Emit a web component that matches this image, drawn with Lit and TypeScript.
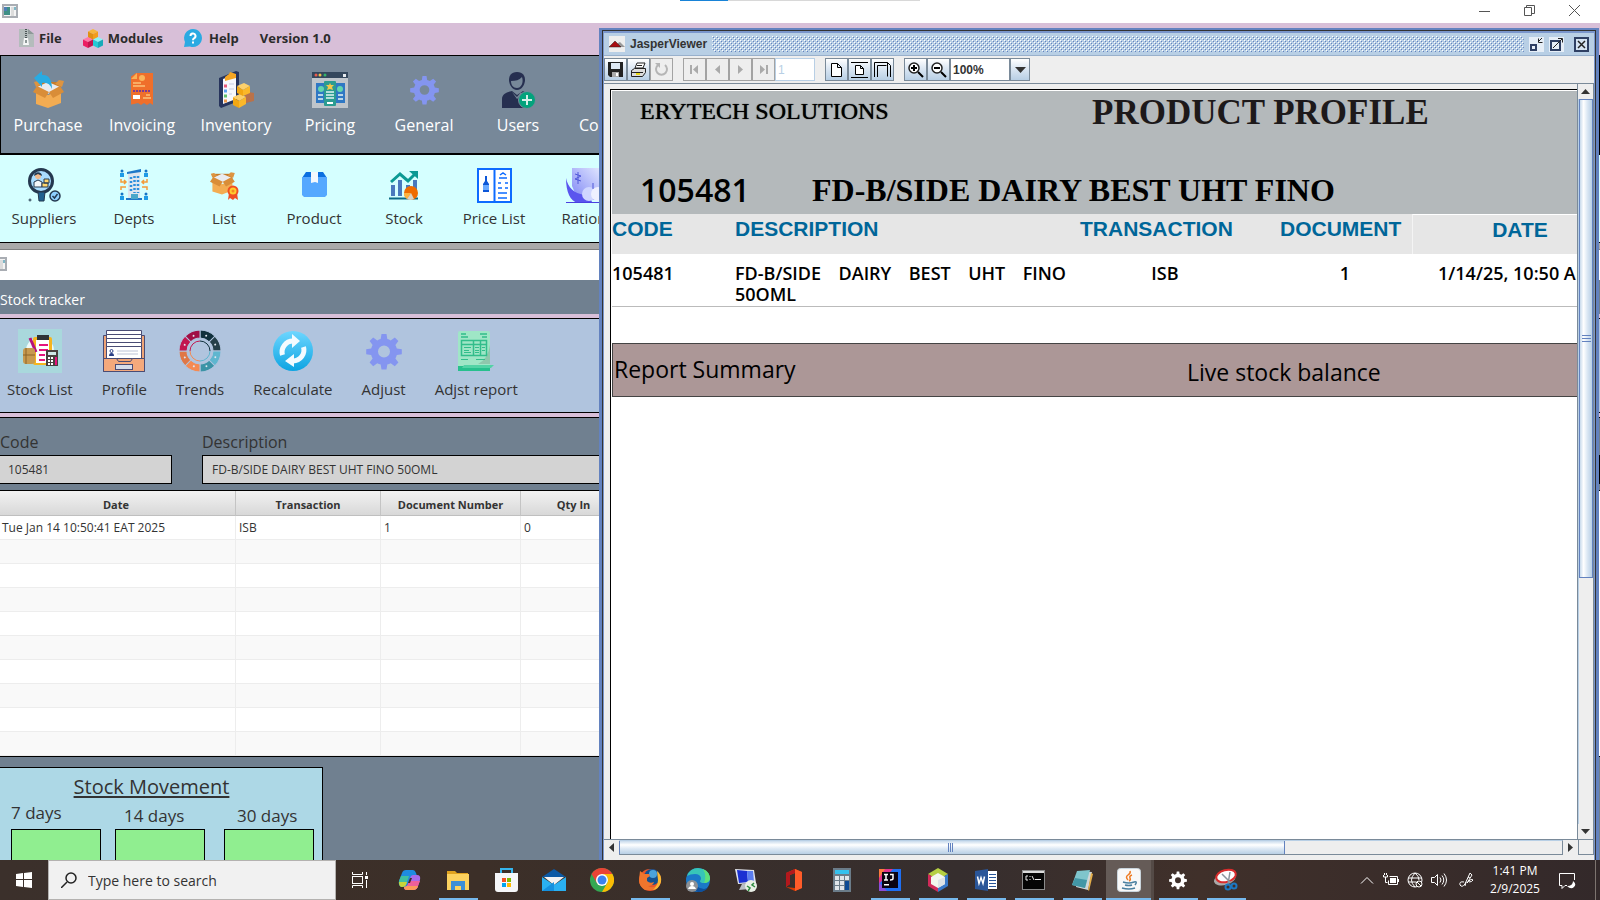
import { LitElement, html, svg, css, nothing, type TemplateResult, type SVGTemplateResult } from "lit";
import { customElement } from "lit/decorators.js";
import { classMap } from "lit/directives/class-map.js";

type Art = SVGTemplateResult;

const draw = (w: number, h: number, art: Art, box = `0 0 ${w} ${h}`) =>
  html`<svg width=${w} height=${h} viewBox=${box} aria-hidden="true">${art}</svg>`;

const gearPath =
  "M15.500 1h5l.8 5a12.500 12.500 0 0 1 3.400 1.400l4.100-3 3.600 3.600-3 4.100a12.500 12.500 0 0 1 1.400 3.400l5 .8v5l-5 .8a12.500 12.500 0 0 1-1.400 3.400l3 4.100-3.600 3.600-4.100-3a12.500 12.500 0 0 1-3.400 1.400l-.8 5h-5l-.8-5a12.500 12.500 0 0 1-3.400-1.400l-4.100 3-3.600-3.600 3-4.100a12.500 12.500 0 0 1-1.400-3.400l-5-.8v-5l5-.8a12.500 12.500 0 0 1 1.400-3.400l-3-4.100 3.600-3.600 4.100 3a12.500 12.500 0 0 1 3.400-1.400z M18 12.500a6 6 0 1 0 0 12 6 6 0 0 0 0-12z";

const gear = svg`<path fill="#8495f0" fill-rule="evenodd" d=${gearPath} />`;

const cube = (x: number, y: number, a: string, b: string, c: string) => svg`
  <g transform="translate(${x} ${y})">
    <path fill=${a} d="M0 2.500 5 0l5 2.500-5 2.500z" /><path fill=${b} d="M0 2.500 5 5v6L0 8.500z" /><path fill=${c} d="M10 2.500 5 5v6l5-2.500z" />
  </g>`;

const appGlyph = svg`
  <rect x="1" y="1" width="14" height="12" fill="#f4f4f4" stroke="#a9adb3" stroke-width="2" />
  <rect x="2" y="3" width="6" height="8" fill="#3f8f86" /><rect x="2" y="3" width="3" height="4" fill="#4f7fb8" />
  <rect x="9" y="3" width="3" height="9" fill="#dcdcdc" /><rect x="12" y="3" width="2" height="3" fill="#7fb7c6" />`;

const zip = svg`
  <path fill="#b4bcbc" d="M1 0h9l6 5v13H1z" /><path fill="#8e9898" d="M10 0v5h6z" />
  <path stroke="#4b5556" stroke-width="2" stroke-dasharray="1 1" d="M8 0v9" /><path fill="#f5f7f7" d="M6 9h4l1 7H5z" /><rect x="7" y="11" width="2" height="3" fill="#8e9898" />`;

const modules = svg`
  ${cube(5, 0, "#f6b73c", "#e09012", "#f29d1c")}${cube(0, 8, "#ff7aa5", "#ec1f63", "#c2164f")}${cube(10, 8, "#8df5f5", "#23cbd4", "#17aab8")}`;

const help = svg`
  <path fill="#2aaae2" d="M9 0a9 9 0 1 1-3 17.500L0 18l1-5A9 9 0 0 1 9 0z" />
  <path fill="none" stroke="#fff" stroke-width="2" d="M6.500 7a2.500 2.500 0 1 1 3.500 2.300c-1 .5-1 1-1 2" /><rect x="8" y="12.500" width="2" height="2" fill="#fff" />`;

const openBox = svg`
  <path fill="#c57c2b" d="M4 6h24v10H4z" /><path fill="#e9ebf0" d="M4 11l11-5 12 5-12 7z" />
  <path fill="#f3ac52" d="M3 14l12 5 13-5v13l-13 5-12-4z" /><path fill="#d98d38" d="M0 16l4-6 12 6-4 6z M31 16l-4-6-11 6 4 6z" />
  <path fill="#dd9440" d="M1 6l4-1 4 3-6 3z M31 5l-5-1-4 4 7 3z" />`;

const purchase = svg`<g transform="translate(0 5)">${openBox}</g><path fill="#29abe2" d="M1 7 9 0v4c7-1 10 5 10 14-2-5-5-7-10-6v4z" />`;

const invoicing = svg`
  <path fill="#ef6f2b" d="M5 0h17v32l-3-2-3 2-3-2-3 2-3-2-4 1-5 1V5z" /><path fill="#f9b157" d="M0 6 6 0v6z" />
  <circle cx="11" cy="5" r="3" fill="#fbb55b" /><path stroke="#fbc27a" stroke-width="1.500" d="M2 10h8M2 13h12" />
  <path stroke="#7a3b95" stroke-width="2" stroke-dasharray="2 1" d="M2 18h18" /><rect x="2" y="22" width="7" height="4" fill="#fff" /><path stroke="#fbc27a" stroke-width="1.500" d="M15 22h4M12 25h8" />`;

const inventory = svg`
  <path fill="#27345c" d="M1 7 18 0l3 1v29L3 37l-2-2z" /><path fill="#f7f8fc" d="M5 8 18 3v25L5 33z" />
  <path fill="#f6a623" d="M7 6l4-3 1-2 3 1 3 1v4L7 10z" />
  <path stroke="#e65c7b" stroke-width="3" d="M6 15h3" /><path stroke="#5aa2f0" stroke-width="3" d="M6 20h3" /><path stroke="#62c36b" stroke-width="3" d="M6 25h3" /><path stroke="#f39c4c" stroke-width="3" d="M6 30h3" />
  <path stroke="#c6cbe0" d="M11 13h5M11 18h5M11 23h3" />
  <path fill="#b9724a" d="M26 20l10 2v8l-8 2z" /><path fill="#fcd06b" d="M19 15l7-3 6 3-7 4z M15 26l7-3 6 3-7 4z" /><path fill="#f3a712" d="M19 15l6 4v6l-6-3z M15 26l6 4v7l-6-3z" /><path fill="#fbb829" d="M32 15l-7 4v6l7-3z M28 26l-7 4v7l7-4z" />`;

const pricing = svg`
  <rect width="36" height="36" fill="#bfc5cb" /><rect width="36" height="6" fill="#34475c" />
  <circle cx="4" cy="3" r="1.500" fill="#e95a4c" /><circle cx="8" cy="3" r="1.500" fill="#f2c14b" /><circle cx="13" cy="3" r="1.500" fill="#34b36b" /><rect x="31" y="2" width="3" height="3" fill="#e6eaee" />
  <rect x="4" y="11" width="29" height="20" fill="#2f78c4" /><rect x="12" y="9" width="12" height="25" rx="1" fill="#2c9c91" />
  <circle cx="9" cy="17" r="3" fill="#63d6ae" /><circle cx="28" cy="17" r="3" fill="#63d6ae" />
  <path fill="#f5c84b" d="M18 11l1 2h3l-2 2 1 3-3-1-3 1 1-3-2-2h3z" /><path stroke="#e5f5f2" stroke-width="1.500" d="M14 20h8M14 23h8M14 26h8M6 23h5M6 27h5M26 23h5M26 27h5" /><rect x="15" y="30" width="6" height="2" fill="#fff" />`;

const users = svg`
  <path fill="#262f50" d="M16 0c6 0 8 4 8 8s-3 10-8 10-8-6-8-10 2-8 8-8z" /><path fill="#778899" d="M10 9c5 0 8-1 11-4 2 6-1 11-5 11s-6-3-6-7z" />
  <path fill="#262f50" d="M1 36V27c0-5 5-7 10-8l5 4 6-4 7 4v13z" /><path fill="#778899" d="M11 20l5 5 4-5 1 2-5 5z" />
  <circle cx="26" cy="28" r="8.500" fill="#03a27c" stroke="#778899" /><path stroke="#d6efe9" stroke-width="2" d="M26 23v10M21 28h10" />`;

const suppliers = svg`
  <circle cx="13" cy="13" r="11.500" fill="#a9dcff" stroke="#24384f" stroke-width="3" /><circle cx="10" cy="8" r="3" fill="#f1b98c" /><path fill="#24384f" d="M6 8c0-5 8-5 8 0l-4-2z" />
  <path fill="#f5f7fa" stroke="#24384f" d="M6 19v-5l4-2 4 2v5z" /><path fill="#ffd66e" stroke="#24384f" d="M14 15h6v4h-6z M16 11h5v4h-5z" />
  <path fill="#20608f" stroke="#24384f" d="M10 24h7l-1 9h-5z" /><circle cx="27" cy="28" r="5" fill="#8fd0ff" stroke="#24384f" stroke-width="1.500" /><path fill="none" stroke="#24384f" stroke-width="1.500" d="M24.500 28l2 2 3-4" /><circle cx="2" cy="32" r="1" fill="none" stroke="#24384f" />`;

const depts = svg`
  <path fill="#dfe6ee" d="M8 3l12-2v29H8z" /><path fill="#1f78c8" d="M7 3l14-3v3L7 5z M6 29h16v2H6z" />
  <path stroke="#2d8fdd" stroke-width="2.500" stroke-dasharray="2 2" d="M11 8v16M14.500 7v17M18 7v17" /><rect x="11" y="25" width="7" height="5" fill="#4aa7c9" />
  ${[[2, 2], [26, 2], [2, 25], [26, 25]].map(([x, y]) => svg`<circle cx=${x} cy=${y} r="1.500" fill="#1374c5" /><rect x=${x - 2} y=${y + 2} width="4" height="4" fill="#1e9be6" />`)}
  <path fill="none" stroke="#f39b3a" stroke-width="1.500" d="M1 10v3h4M27 10v3h-4M1 21v-3h5M27 21v-3h-5M4 11l2 2-2 2M24 11l-2 2 2 2" />`;

const listBox = svg`<g transform="scale(.8)">${openBox}</g>
  <path fill="#f04e23" d="M19 24h4v7l-3-2-2 2z M23 24h4l1 7-3-2-2 2z" /><circle cx="23" cy="22" r="5.500" fill="#f04e23" /><circle cx="23" cy="22" r="3.500" fill="#ffcb2e" /><circle cx="23" cy="22" r="1.500" fill="#f58a1f" />`;

const product = svg`<path fill="#0b6fe0" d="M4 0h17l4 6H0z" /><path fill="#55a8ff" d="M0 5h25v18l-2 2H2l-2-2z" /><path fill="#f4f8fc" d="M9 0h7v11l-3-1-4 1z" />`;

const stock = svg`
  <path stroke="#4979bd" stroke-width="4" d="M4 15v11M11 10v16M19 15v11M26 10v16" /><path fill="none" stroke="#0b9a94" stroke-width="3" d="M2 12l9-8 8 7 7-7" /><path fill="#0b9a94" d="M20 1h9v8z" />
  <path stroke="#0c6a86" stroke-width="2" d="M0 28.500h29" /><circle cx="22" cy="23" r="7" fill="#ef6c00" /><path fill="#ffb33f" d="M22 23h-7a7 7 0 0 0 3 6z" /><path fill="#d9d3c5" d="M22 23l-4 6a7 7 0 0 0 7 0z" />`;

const priceList = svg`
  <rect x="1" y="1" width="33" height="33" fill="#fff" stroke="#0d6bff" stroke-width="2" /><path stroke="#0d6bff" stroke-width="2" d="M17.500 1v33" />
  <path fill="#0d57d8" d="M8 8h2v5l2 3v8H6v-8l2-3z" /><rect x="6" y="17" width="6" height="5" fill="#69a9ff" /><path stroke="#0d6bff" stroke-width="1.500" d="M22 10h8M21 15h3M21 20h4M21 25h9M21 30h9M28 15h3M28 20h3" /><path fill="none" stroke="#0d6bff" stroke-width="1.500" d="M23 7l3-2 3 2" />`;

const ration = svg`
  <defs><linearGradient id="rg" x1="0" y1="1" x2="1" y2="0"><stop offset="0" stop-color="#7f86f5" /><stop offset="1" stop-color="#e3e9ff" /></linearGradient></defs>
  <path fill="url(#rg)" d="M6 0h30v32H12L6 18z" /><path fill="#5a55ee" d="M0 10c2 10 8 15 18 17 5 1 8 4 8 8H12C4 33 0 24 0 10z" /><circle cx="23" cy="26" r="7" fill="#cfd6ff" /><circle cx="32" cy="26" r="7" fill="#eef0ff" /><path fill="none" stroke="#4f58d8" d="M12 4v12M9 6l6 2-6 3 6 2M27 15v6" /><path stroke="#4a3fe0" d="M0 34.500h36" />`;

const stockList = svg`
  <rect width="44" height="44" fill="#a9d8dc" /><circle cx="22" cy="22" r="14" fill="#eef9f9" /><rect x="15" y="8" width="19" height="28" rx="2" fill="#f6b51e" /><rect x="18" y="11" width="13" height="23" fill="#fff" /><rect x="19" y="6" width="12" height="5" fill="#303438" />
  <path stroke="#e5137d" stroke-width="2" d="M21 16h9M21 21h9M21 26h6M21 31h6" /><path stroke="#b5127b" stroke-width="3" d="M12 9l6 14" /><rect x="5" y="19" width="12" height="16" rx="3" fill="#c79a4f" /><path stroke="#8d6429" d="M8 19v16M5 26h12" />
  <rect x="28" y="21" width="12" height="16" fill="#47403f" /><rect x="30" y="23" width="8" height="3" fill="#cfe8e8" /><path stroke="#fff" stroke-width="2" stroke-dasharray="2 1" d="M30 29h6M30 32h6M30 35h6" /><rect x="37" y="28" width="2" height="8" fill="#e5137d" />`;

const profile = svg`
  <path fill="#efa476" stroke="#4a4c74" d="M.5 5.500h5V20h31V5.500h5V42H.5z" /><path fill="#fff" stroke="#4a4c74" d="M3.500.500h35v4h-35z M3.500 4.500h35v4h-35z M3.500 8.500h35v4h-35z M3.500 12.500h35v4h-35z M3.500 16.500h35v12h-35z" />
  <circle cx="8.500" cy="21" r="1.500" fill="#fff" stroke="#2b3f86" /><path fill="#2b3f86" d="M6 26q0-3 2.500-3t2.500 3z" /><path stroke="#bcc3d6" d="M14 21h21M14 24h21" /><path fill="#f4a97c" stroke="#4a4c74" d="M.500 28.500h13l2 3h12l2-3h12v13H.500z" /><rect x="12.500" y="34.500" width="17" height="5" fill="#d5dcea" stroke="#4a4c74" />`;

const ringColors = ["#10303c", "#25404a", "#5fb6cf", "#3b93a6", "#f58a52", "#e07746", "#c21750", "#a00f45"];
const trends = svg`
  ${ringColors.map((c, i) => svg`<path fill=${c} stroke="#b0c4de" transform="rotate(${i * 45} 21 21)" d="M21 0a21 21 0 0 1 14.850 6.150l-5.660 5.660A13 13 0 0 0 21 8z" /><circle cx="21" cy="4.500" r="1" fill="#dfe6ee" transform="rotate(${i * 45 + 22} 21 21)" />`)}
  <path fill="none" stroke="#c21750" d="M11 21a10 10 0 0 1 10-10" /><path fill="none" stroke="#10303c" d="M21 11a10 10 0 0 1 10 10" /><path fill="none" stroke="#5fb6cf" d="M31 21a10 10 0 0 1-10 10" /><path fill="none" stroke="#f58a52" d="M21 31a10 10 0 0 1-10-10" />`;

const recalc = svg`
  <defs><linearGradient id="rc" x1="0" y1="0" x2="0" y2="1"><stop offset="0" stop-color="#6ed6ff" /><stop offset="1" stop-color="#0ca4e2" /></linearGradient></defs>
  <circle cx="20" cy="20" r="20" fill="url(#rc)" /><path fill="none" stroke="#f4fbff" stroke-width="5" d="M9.500 24a11 11 0 0 1 10.500-14M30.500 16a11 11 0 0 1-10.500 14" /><path fill="#f4fbff" d="M19 3l8 7-8 7z M21 23l-9 7 9 6z" />`;

const adjReport = svg`
  <path fill="#9fe6c6" d="M0 2q0-2 2-2h28q2 0 2 2v34H0z" /><path fill="#27c08d" d="M0 35h32v5H0z" /><path fill="#52d3a5" d="M6 34h30l-3 3H4z" /><path fill="#8fc7ac" d="M32 14v19H20q10-5 12-19z" />
  <path stroke="#32bd8b" stroke-width="1.500" d="M3 3h5M3 6h7M22 3h7M24 6h5" /><path fill="none" stroke="#32bd8b" stroke-width="1.500" d="M3.500 9.500h25v15h-25z M3.500 13.500h25 M15.500 9.500v15 M22.500 9.500v15" /><path stroke="#32bd8b" d="M6 16.500h7M6 19.500h5M6 21.500h7M17 16.500h4M17 19.500h4M17 21.500h4M24 16.500h3M24 19.500h3M3 28.500h7M18 28.500h9" />`;

interface Tool { label: string; w: number; h: number; art?: Art; box?: string; cut?: boolean; }

const mainTools: Tool[] = [
  { label: "Purchase", w: 31, h: 38, art: purchase },
  { label: "Invoicing", w: 22, h: 34, art: invoicing },
  { label: "Inventory", w: 37, h: 38, art: inventory },
  { label: "Pricing", w: 36, h: 36, art: pricing },
  { label: "General", w: 29, h: 30, art: gear, box: "0 0 36 37" },
  { label: "Users", w: 35, h: 37, art: users },
  { label: "Co", w: 30, h: 36, cut: true },
];

const subTools: Tool[] = [
  { label: "Suppliers", w: 33, h: 34, art: suppliers },
  { label: "Depts", w: 28, h: 32, art: depts },
  { label: "List", w: 29, h: 32, art: listBox },
  { label: "Product", w: 25, h: 26, art: product },
  { label: "Stock", w: 30, h: 30, art: stock },
  { label: "Price List", w: 35, h: 35, art: priceList },
  { label: "Ration", w: 36, h: 35, art: ration },
];

const trackerTools: Tool[] = [
  { label: "Stock List", w: 44, h: 44, art: stockList },
  { label: "Profile", w: 42, h: 42, art: profile },
  { label: "Trends", w: 42, h: 42, art: trends },
  { label: "Recalculate", w: 40, h: 40, art: recalc },
  { label: "Adjust", w: 36, h: 37, art: gear },
  { label: "Adjst report", w: 36, h: 40, art: adjReport },
];

const flag = (x: number, y: number, s: number) => svg`
  <rect x=${x} y=${y} width=${s} height=${s} fill="#f25022" /><rect x=${x + s + 1} y=${y} width=${s} height=${s} fill="#7fba00" />
  <rect x=${x} y=${y + s + 1} width=${s} height=${s} fill="#00a4ef" /><rect x=${x + s + 1} y=${y + s + 1} width=${s} height=${s} fill="#ffb900" />`;

const taskArt: { name: string; art: Art; open?: boolean; active?: boolean }[] = [
  { name: "Task View", art: svg`<g fill="none" stroke="#fff" transform="translate(2 4)"><rect x=".5" y="4.500" width="10" height="7" /><path d="M.500 0v2.500h10V0M.500 16v-2.500h10V16M14.500 0v3M14.500 8v8" /><rect x="13.500" y="4.500" width="2" height="2" fill="#fff" /></g>` },
  { name: "Copilot", art: svg`<path fill="#1e8be0" d="M8 2h7q2 0 3 3l1 3h-4q-2 0-3 3l-2 5q-1 3-4 3H4q-4-1-3-6L4 5q1-3 4-3z" /><path fill="#3fc0a0" d="M3 8h8l-3 9q-1 2-4 2-4-1-3-6z" /><path fill="#c8d43a" d="M1 14h8l-1 3q-1 2-4 2-3 0-3-5z" /><path fill="#a66bea" d="M15 7h4q4 0 3 5l-2 6q-1 4-5 4H9q-3 0-3-3 3 0 4-3l2-6q1-3 3-3z" /><path fill="#ee5f9b" d="M11 13h11l-2 5q-1 4-5 4H9q-3 0-3-3 3 0 4-3z" /><path fill="#fb9a5b" d="M9 18h11q-1 4-5 4H9q-3 0-3-3z" /><path fill="#3a302a" d="M12 10h2l-2 5h-2z" />` },
  { name: "File Explorer", open: true, art: svg`<path fill="#e0a320" d="M1 3h8l2 2h11v4H1z" /><path fill="#fcd25f" d="M1 6h22v16H1z" /><path fill="#3c8fd6" d="M5 13h14v9h-4v-4H9v4H5z" />` },
  { name: "Store", art: svg`<path fill="none" stroke="#35b5ee" stroke-width="2" d="M7 6V1h11v5" /><path fill="#f5f6f8" d="M1 5h23v16q0 3-3 3H4q-3 0-3-3z" />${flag(8, 10, 4)}` },
  { name: "Mail", art: svg`<path fill="#0c59a4" d="M0 9 12 1l12 8z" /><path fill="#f2f2f2" d="M2 9h20l-10 8z" /><path fill="#2ab0f1" d="M0 9l12 8 12-8v14H0z" /><path fill="#1490df" d="M0 23l12-9v9z" />` },
  { name: "Chrome", art: svg`<circle cx="12" cy="12" r="12" fill="#34a853" /><path fill="#ea4335" d="M1.600 6A12 12 0 0 1 22.400 6H12a6 6 0 0 0-5.200 3z" /><path fill="#ea4335" d="M1.600 6 6.800 15 12 6z" /><path fill="#fbbc05" d="M22.400 6A12 12 0 0 1 12 24l5.200-9a6 6 0 0 0 0-6L12 6z" /><circle cx="12" cy="12" r="6" fill="#fff" /><circle cx="12" cy="12" r="4.500" fill="#3b82f0" />` },
  { name: "Firefox", open: true, art: svg`<circle cx="12" cy="12" r="11" fill="#e8562a" /><circle cx="14" cy="9" r="8" fill="#14508f" /><circle cx="15" cy="6" r="4" fill="#4aa3dc" /><path fill="#f0752c" d="M2 3l4 3 5 0 1 2-3 2v3q3 3 7 1-1 4-6 4 5 3 9-1l-3 5H7Q1 18 1 12z" /><path fill="#fbb935" d="M19 3q5 4 4 11-2 7-8 8 5-5 5-10z" />` },
  { name: "Edge", art: svg`<circle cx="12" cy="12" r="12" fill="#1a78c8" /><path fill="#37c5b8" d="M1 8Q4 0 12 0q11 1 12 10 0 5-6 5-4 0-4-2 1-1 1-3-1-4-6-4-5 0-8 2z" /><path fill="#5fe07a" d="M17 1q7 3 7 10-1 4-6 4 3-7-1-14z" /><path fill="#0d4f9d" d="M9 12q-1 8 9 9 3 0 5-3-3 6-11 6-7-2-3-12z" /><circle cx="6" cy="18" r="6" fill="#8d9196" /><circle cx="6" cy="16" r="2" fill="#fff" /><path fill="#fff" d="M2 21q1-3 4-3t4 3z" />` },
  { name: "Remote Desktop", art: svg`<path fill="#e1e4ec" d="M1 1l19 1 2 13-18 1z" /><path fill="#1a30d2" d="M3 2l10 1 1 11-9 1z" /><path fill="#5a7df0" d="M13 3h6l1 11-6 0z" /><path fill="#b9bec5" d="M8 16l7-1 1 6-11 1z" /><circle cx="17" cy="18" r="6" fill="#e9efe6" /><path fill="none" stroke="#2c8b3f" stroke-width="1.500" d="M13 18l3 2-2 3M20 15l-2 2 3 2" />` },
  { name: "Office", art: svg`<path fill="#d83b01" d="M4 5l9-4 7 3v16l-7 3-9-4 9 1V5L8 7v9l-4 3z" /><path fill="#ff5c29" d="M13 1l7 3v16l-7 3z" /><path fill="#b3181d" d="M4 5l9-4v4L8 7v9l-4 3z" />` },
  { name: "Calculator", art: svg`<rect x="3" y="0" width="18" height="24" fill="#6b7c89" /><rect x="5" y="2" width="14" height="4" fill="#34c1ee" /><g fill="#dfe5ea"><rect x="5" y="8" width="4" height="4" /><rect x="10" y="8" width="4" height="4" /><rect x="15" y="8" width="4" height="4" /><rect x="5" y="13" width="4" height="4" /><rect x="10" y="13" width="4" height="4" /><rect x="5" y="18" width="4" height="4" /><rect x="10" y="18" width="4" height="4" /></g><rect x="15" y="13" width="4" height="9" fill="#0c4a94" />` },
  { name: "IntelliJ IDEA", open: true, art: svg`<rect x="1" y="1" width="22" height="22" fill="#1f6ff2" /><path fill="#e4318a" d="M1 1h14L1 16z" /><path fill="#fc7a3c" d="M1 1h6L1 10z" /><path fill="#8a4fd8" d="M1 14l8 9H1z" /><rect x="4" y="4" width="16" height="16" fill="#0b0310" /><path stroke="#fff" stroke-width="1.500" fill="none" d="M6 6.500h4M8 6.500v5M6 12h4M12 6.500h3v4q0 1.500-3 1.500" /><rect x="6" y="16" width="5" height="1.500" fill="#fff" />` },
  { name: "NetBeans", open: true, art: svg`<path fill="#b5cf42" d="M12 0l10 6-10 6L2 6z" /><path fill="#d02a59" d="M2 6l10 6v12L2 18z" /><path fill="#3a79c9" d="M22 6l-10 6v12l10-6z" /><path fill="#f3f6ee" d="M12 5l7 4v7l-7 4-7-4V9z" /><path fill="#dfe3e6" d="M12 12l7-3v7l-7 4z" />` },
  { name: "Word", open: true, art: svg`<rect x="12" y="3" width="11" height="18" fill="#fff" /><path stroke="#2a5699" d="M15 6.500h7M15 9.500h7M15 12.500h7M15 15.500h7M15 18.500h7" /><path fill="#2a5699" d="M1 3l13-2v22L1 21z" /><path fill="none" stroke="#fff" stroke-width="1.500" d="M3.500 8.500l1.500 7 2-6 2 6 1.500-7" />` },
  { name: "Command Prompt", open: true, art: svg`<rect x=".5" y="2.500" width="22" height="19" fill="#050505" stroke="#8b8b8b" /><rect x="1" y="3" width="21" height="2" fill="#dcdcdc" /><path fill="none" stroke="#ededed" d="M6 8H4v4h2M8 8v1M8 11v1M10 8l2 4M13 11.500h6" />` },
  { name: "Notepad", open: true, art: svg`<path fill="#cfd6d8" d="M8 3l14 1-4 18-12-3z" /><path fill="#7fc5cc" d="M7 3l13-1-5 18-13-3z" /><path fill="#4397a6" d="M5 10l12 2-2 8-13-3z" /><path fill="#e6b04a" d="M21 5l2 1-4 17-1-1z" />` },
  { name: "Java", open: true, active: true, art: svg`<rect x=".5" y=".5" width="23" height="23" rx="3" fill="#f8f8f8" stroke="#c9d4dc" /><path fill="none" stroke="#ee7b23" stroke-width="1.500" d="M13 3q1 2-2 4t0 5M15 7q-3 1-2 3t-1 3" /><path fill="none" stroke="#4a7f9f" stroke-width="1.500" d="M6 14q6 2 11 0M17 14q4-1 1 3M8 17q4 1 7 0M5 20q7 2 13 0" />` },
  { name: "Settings", open: true, art: svg`<g transform="translate(3 3) scale(.5)"><path fill="#fff" fill-rule="evenodd" d=${gearPath} /></g>` },
  { name: "Snipping Tool", open: true, art: svg`<ellipse cx="11" cy="11" rx="11" ry="6" fill="#a9a9a9" transform="rotate(-15 11 12)" /><ellipse cx="12" cy="8" rx="10" ry="6" fill="#fdfdfd" stroke="#da2c2c" stroke-width="2" transform="rotate(-15 12 8)" /><path stroke="#8b949c" stroke-width="1.500" d="M8 6l9 9M16 4l-2 12" /><circle cx="14" cy="19" r="2.500" fill="none" stroke="#1c78c2" stroke-width="2" /><circle cx="20" cy="18" r="2.500" fill="none" stroke="#1c78c2" stroke-width="2" />` },
];

const trayArt: { name: string; art: Art }[] = [
  { name: "Show hidden icons", art: svg`<path d="M2 11.500l6-6 6 6" />` },
  { name: "Battery", art: svg`<path d="M.500 3v2h4V3M1.500 1v2M3.500 1v2M2.500 5v5.500h2" /><path d="M6.500 4.500h8v8h-9v-4" /><path fill="#fff" stroke="none" d="M7 6h6v5H7z" /><path d="M15.500 7v3" />` },
  { name: "Network", art: svg`<circle cx="8" cy="8" r="7" /><path d="M1 6h14M1 10h8M8 1q-7 7 0 14M8 1q4 3 4 7" /><circle cx="12" cy="12" r="3" fill="#3a302a" /><path d="M10 10l4 4" />` },
  { name: "Volume", art: svg`<path d="M.500 5.500h3l3-3v11l-3-3h-3z" /><path d="M9 5.500q2 2.500 0 5M11 3.500q3.500 4.500 0 9M13 1.500q5 6.500 0 13" />` },
  { name: "Ink Workspace", art: svg`<path d="M5 10q-5-1-4 3 2 3 5-1l5-11 2 2-5 8q4-5 6-3-1 2-4 2M6 14l1-4M9 5l2 1" />` },
];

@customElement("desktop-taskbar")
class DesktopTaskbar extends LitElement {
  static styles = css`
    :host { display: flex; height: 40px; background: linear-gradient(90deg, #3b302b, #3c2f28 30%, #362e2e 60%, #40302a 75%, #33292a); font-family: "Open Sans", "Noto Sans", sans-serif; color: #fff; }
    button { border: 0; padding: 0; background: none; color: inherit; font: inherit; display: grid; place-items: center; }
    .start { width: 48px; }
    .search { display: flex; align-items: center; gap: 11px; width: 288px; box-sizing: border-box; padding: 0 12px; border: 1px solid #b4b2b0; background: #f1f1f1; color: #222; }
    .search input { flex: 1; min-width: 0; border: 0; padding: 0; background: none; outline: 0; font: 14px "Open Sans", sans-serif; color: #222; }
    .search input::placeholder { color: #333; opacity: 1; }
    .tasks { display: flex; flex: 1; min-width: 0; padding-left: 2px; }
    .task { width: 48px; height: 40px; flex: none; box-sizing: border-box; }
    .open { background: linear-gradient(#76b9ed, #76b9ed) center bottom / 39px 2px no-repeat; }
    .active { background: linear-gradient(#76b9ed, #76b9ed) center bottom / 48px 2px no-repeat, #655b57; border-right: 3px solid #544a46; }
    .tray { display: flex; align-items: center; padding-right: 8px; }
    .tray button { width: 24px; height: 40px; }
    .tray .ink { width: 32px; }
    .tray svg { fill: none; stroke: #fff; }
    .clock { width: 64px; text-align: center; font-size: 12px; line-height: 18px; }
    .tray .note { width: 40px; }
    .edge { width: 1px; background: #7d746f; margin-right: 4px; height: 40px; }
  `;

  render() {
    return html`
      <button class="start" aria-label="Start">${draw(16, 16, svg`<path fill="#fff" d="M0 2l7-1v6H0z M8 1l8-1v7H8z M0 8h7v7l-7-1z M8 8h8v8l-8-1z" />`)}</button>
      <label class="search">
        ${draw(16, 16, svg`<circle cx="10" cy="6" r="5" fill="none" stroke="#222" stroke-width="1.500" /><path stroke="#222" stroke-width="1.500" d="M6 10l-6 6" />`)}
        <input type="text" placeholder="Type here to search" aria-label="Type here to search" />
      </label>
      <nav class="tasks">
        ${taskArt.map((t) => html`<button class=${classMap({ task: true, open: !!t.open, active: !!t.active })} aria-label=${t.name}>${draw(24, 24, t.art)}</button>`)}
      </nav>
      <div class="tray">
        ${trayArt.map((t) => html`<button class=${t.name === "Ink Workspace" ? "ink" : nothing} aria-label=${t.name}>${draw(16, 16, t.art)}</button>`)}
        <div class="clock">1:41 PM<br />2/9/2025</div>
        <button class="note" aria-label="Notifications">${draw(17, 17, svg`<path d="M8 13.500H6l-3 3v-3H.500v-12h15V8" /><path fill="#fff" stroke="none" d="M14 9q0 5-6 5 4 4 7 1t-1-6z" />`)}</button>
      </div>
      <div class="edge"></div>`;
  }
}

@customElement("jasper-viewer")
class JasperViewer extends LitElement {
  static styles = css`
    :host { display: flex; flex-direction: column; box-sizing: border-box; background: #eee; border: solid #6382bf; border-width: 2px 3px 0; font-family: "Liberation Sans", Arial, sans-serif; }
    button { padding: 0; margin: 0; font: inherit; }
    svg { display: block; }
    .frame { display: flex; flex-direction: column; flex: 1; min-height: 0; border: solid #333; border-width: 1px 1px 0; }
    .inner { display: flex; flex-direction: column; flex: 1; min-height: 0; border: solid #7a96cc; border-width: 2px 1px 0; }
    .title { display: flex; align-items: center; gap: 5px; height: 23px; padding: 0 5px; box-sizing: border-box; background: #b8cfe5; border-bottom: 1px solid #98b0cc; color: #333; font-size: 12px; font-weight: bold; }
    .logo { background: #eee; }
    .bumps { flex: 1; height: 16px; min-width: 0; }
    .title button { border: 0; background: none; }
    .bar { display: flex; align-items: center; gap: 10px; height: 28px; box-sizing: border-box; border-bottom: 1px solid #7a8a99; }
    .group { display: flex; }
    .tool { box-sizing: border-box; width: 23px; height: 23px; border: 1px solid #7a8a99; background: linear-gradient(#fff, #dfe9f4 40%, #b8cfe5); display: grid; place-items: center; }
    .tool:disabled { background: #eee; border-color: #a3a3a3; }
    .tool.drop { width: 20px; }
    .page { box-sizing: border-box; width: 40px; height: 23px; border: 1px solid #b8cfe5; background: #fff; color: #b8cfe5; font: 12px "Liberation Sans", sans-serif; padding: 0 2px; }
    .zoom { appearance: none; box-sizing: border-box; width: 60px; height: 23px; border: 1px solid #7a8a99; border-radius: 0; background: #fff; color: #333; font: bold 12px "Liberation Sans", sans-serif; padding: 0 2px; }
    .pane { flex: 1; min-height: 0; display: grid; grid-template-columns: minmax(0, 1fr) 16px; grid-template-rows: minmax(0, 1fr) 16px; margin-bottom: 5px; }
    .view { overflow: hidden; padding: 5px 0 0 6px; border-right: 1px solid #7a8a99; }
    .sheet { height: 100%; border: solid #000; border-width: 1px 0 0 1px; background: #fff; padding: 1px 0 0 1px; color: #000; }
    .head { background: #b4b9bb; height: 123px; display: grid; grid-template-columns: 172px 280px 1fr; grid-template-rows: 56px 67px; padding-left: 28px; box-sizing: border-box; white-space: nowrap; }
    h1, h2, p { margin: 0; font-weight: normal; }
    .firm { grid-column: 1 / 3; font: 24px/41px "Liberation Serif", serif; text-shadow: 0 0 1px #000; }
    .kind { font: bold 35px/44px "Liberation Serif", serif; color: #1d191a; }
    .num { font: 600 32px/85px "Open Sans", sans-serif; }
    .item { grid-column: 2 / 4; font: bold 32px/86px "Liberation Serif", serif; }
    table { border-collapse: separate; border-spacing: 0; table-layout: fixed; width: 1015px; }
    th, td { box-sizing: border-box; padding: 0; vertical-align: top; }
    .c1 { width: 123px; } .c2 { width: 335px; } .c3 { width: 190px; } .c4 { width: 152px; } .c5 { width: 215px; }
    th { background: #e6e6e6; color: #069; height: 40px; text-align: left; font: bold 21px/30px "Liberation Sans", sans-serif; }
    td { height: 53px; padding-top: 9px; text-align: center; border-bottom: 1px solid #bbb; font: 600 18px/21px "Open Sans", sans-serif; }
    .l { text-align: left; }
    .j { text-align: justify; padding-right: 4px; }
    .pad { padding-left: 18px; }
    .when { text-align: left; padding-left: 26px; }
    th.c3 { padding-left: 10px; } th.c4 { padding-left: 20px; }
    th.c5 { text-align: center; border-top: 1px solid #fff; border-left: 1px solid #f4f4f4; }
    .sum { display: grid; grid-template-columns: 573px 1fr; margin-top: 36px; border: solid #444; border-width: 1px 0 1px 1px; background: #ac9797; height: 52px; padding-left: 1px; font: 23px/50px "Open Sans", sans-serif; }
    .sum p + p { padding-top: 3px; }
    .vs { display: flex; flex-direction: column; border-right: 1px solid #7a8a99; }
    .hs { display: flex; border: solid #7a8a99; border-width: 1px 0 1px; }
    .arrow { display: grid; place-items: center; width: 15px; height: 15px; border: 0; background: #eee; flex: none; }
    .vs .track { flex: 1; box-sizing: border-box; border-left: 1px solid #b8cfe5; display: flex; }
    .hs .track { flex: 1; display: flex; border-right: 1px solid #7a8a99; border-top: 1px solid #b8cfe5; box-sizing: border-box; }
    .vthumb { width: 15px; height: 66%; box-sizing: border-box; border: solid #6382bf; border-width: 1px; background: linear-gradient(90deg, #c8daec, #fff 30%, #dce8f4 60%, #b8cfe5); display: grid; place-items: center; }
    .hthumb { width: 70.600%; box-sizing: border-box; border: solid #6382bf; border-width: 0 1px; background: linear-gradient(#c8daec, #fff 30%, #dce8f4 60%, #b8cfe5); display: grid; place-items: center; }
    .corner { border: 1px solid #7a8a99; }
  `;

  private tool(name: string, art: Art, off = false): TemplateResult {
    return html`<button class="tool" aria-label=${name} ?disabled=${off}>${draw(17, 17, art)}</button>`;
  }

  render() {
    const arrow = (name: string, d: string) => html`<button class="arrow" aria-label=${name}>${draw(9, 9, svg`<path fill="#333" d=${d} />`)}</button>`;
    const sheetIcon = "M3.500 2.500h6l4 4v9h-10z M9.500 2.500v4h4";
    return html`
      <div class="frame"><div class="inner">
        <header class="title">
          <span class="logo">${draw(16, 16, svg`<path fill="#999" d="M9 7l2-1 5 5H8z" /><path fill="#a80d12" stroke="#222" stroke-width=".5" d="M0 11l6-6 6 6z" />`)}</span>
          <span>JasperViewer</span>
          <svg class="bumps" aria-hidden="true">
            <pattern id="b" width="4" height="4" patternUnits="userSpaceOnUse"><path fill="#fff" d="M0 0h1v1H0z M2 2h1v1H2z" /><path fill="#6382bf" d="M1 1h1v1H1z M3 3h1v1H3z" /></pattern>
            <rect width="100%" height="100%" fill="url(#b)" />
          </svg>
          <button aria-label="Minimize">${draw(15, 15, svg`<path fill="#e6eef7" d="M0 0h15v15H0z" /><path fill="none" stroke="#2e3f63" stroke-width="2" d="M2 8h5v5H2z" /><path fill="none" stroke="#222" d="M13 1l-4 4M9.500 1.500v4h4" />`)}</button>
          <button aria-label="Maximize">${draw(15, 15, svg`<path fill="#e6eef7" d="M0 0h15v15H0z" /><path fill="none" stroke="#2e3f63" stroke-width="2" d="M2 4h9v9H2z" /><path fill="none" stroke="#222" d="M4 11l9-9M9 1.500h4.500v4" />`)}</button>
          <span></span>
          <button aria-label="Close">${draw(15, 15, svg`<path fill="#d5e3f2" stroke="#2e3f63" stroke-width="2" d="M1 1h13v13H1z" /><path stroke="#222" stroke-width="1.500" d="M4 4l7 7M11 4l-7 7" />`)}</button>
        </header>
        <div class="bar">
          <div class="group">
            ${this.tool("Save", svg`<path fill="#222" d="M1 1h15v15H3l-2-2z" /><path fill="#dfe9f4" d="M4 2h9v6H4z" /><path fill="#aaa" d="M5 11h7v5H5z" /><path fill="#fff" d="M9 12h2v3H9z" />`)}
            ${this.tool("Print", svg`<path fill="#fff" stroke="#222" d="M5 7l2-5h8l-2 5z" /><path stroke="#222" d="M7 4.500h5" /><path fill="#ddd" stroke="#222" d="M1.500 9.500l3-2h11v4l-3 4h-11z" /><path stroke="#222" d="M1 11.500h12" /><path stroke="#e8d716" stroke-width="2" d="M6 13h4" />`)}
            ${this.tool("Reload", svg`<path fill="none" stroke="#b5b5b5" stroke-width="2" d="M5 4a5.500 5.500 0 1 0 7 0" /><path fill="#b5b5b5" d="M2 2h5v5z" />`, true)}
          </div>
          <div class="group">
            ${this.tool("First page", svg`<path fill="#aaa" d="M4 4h2v9H4z M12 4v9L7 8.500z" />`, true)}
            ${this.tool("Previous page", svg`<path fill="#aaa" d="M11 4v9L6 8.500z" />`, true)}
            ${this.tool("Next page", svg`<path fill="#aaa" d="M6 4v9l5-4.500z" />`, true)}
            ${this.tool("Last page", svg`<path fill="#aaa" d="M11 4h2v9h-2z M5 4v9l5-4.500z" />`, true)}
            <input class="page" type="text" value="1" aria-label="Page" disabled />
          </div>
          <div class="group">
            ${this.tool("Actual size", svg`<path fill="#fff" stroke="#000" d=${sheetIcon} />`)}
            ${this.tool("Fit page", svg`<path stroke="#000" d="M0 1.500h17M0 16.500h17" /><path fill="#fff" stroke="#000" d="M4.500 4.500h5l3 3v6h-8z M9.500 4.500v3h3" />`)}
            ${this.tool("Fit width", svg`<path fill="none" stroke="#000" d="M.500 16V1.500h13l3 3V16M3.500 16V4.500h9M13.500 1.500v14" />`)}
          </div>
          <div class="group">
            ${this.tool("Zoom in", svg`<circle cx="7" cy="7" r="5" fill="#fff" stroke="#222" stroke-width="1.500" /><path stroke="#000" stroke-width="2" d="M4 7h6M7 4v6M11 11l5 5" />`)}
            ${this.tool("Zoom out", svg`<circle cx="7" cy="7" r="5" fill="#fff" stroke="#222" stroke-width="1.500" /><path stroke="#000" stroke-width="2" d="M4 7h6M11 11l5 5" />`)}
            <select class="zoom" aria-label="Zoom"><option>100%</option></select>
            <button class="tool drop" aria-label="Zoom levels">${draw(11, 11, svg`<path fill="#333" d="M0 3h11L5.500 9z" />`)}</button>
          </div>
        </div>
        <div class="pane">
          <div class="view"><article class="sheet">
            <header class="head">
              <p class="firm">ERYTECH SOLUTIONS</p><h1 class="kind">PRODUCT PROFILE</h1>
              <p class="num">105481</p><h2 class="item">FD-B/SIDE DAIRY BEST UHT FINO</h2>
            </header>
            <table>
              <thead><tr><th class="c1">CODE</th><th class="c2">DESCRIPTION</th><th class="c3">TRANSACTION</th><th class="c4">DOCUMENT</th><th class="c5">DATE</th></tr></thead>
              <tbody><tr><td class="l">105481</td><td class="j">FD-B/SIDE DAIRY BEST UHT FINO 50OML</td><td>ISB</td><td class="pad">1</td><td class="when">1/14/25, 10:50 AM</td></tr></tbody>
            </table>
            <section class="sum"><p>Report Summary</p><p>Live stock balance</p></section>
          </article></div>
          <div class="vs">
            ${arrow("Scroll up", "M0 7h9L4.500 2z")}
            <div class="track"><div class="vthumb">${draw(9, 7, svg`<path stroke="#6382bf" d="M0 .500h9M0 3.500h9M0 6.500h9" />`)}</div></div>
            ${arrow("Scroll down", "M0 2h9L4.500 7z")}
          </div>
          <div class="hs">
            ${arrow("Scroll left", "M7 0v9L2 4.500z")}
            <div class="track"><div class="hthumb">${draw(7, 9, svg`<path stroke="#6382bf" d="M.500 0v9M2.500 0v9M4.500 0v9" />`)}</div></div>
            ${arrow("Scroll right", "M2 0v9l5-4.500z")}
          </div>
          <div class="corner"></div>
        </div>
      </div></div>`;
  }
}

@customElement("app-root")
class AppRoot extends LitElement {
  static styles = css`
    :host { display: flex; flex-direction: column; height: 100vh; overflow: hidden; font-family: "Open Sans", "Noto Sans", sans-serif; color: #333; }
    button { border: 0; padding: 0; background: none; color: inherit; font: inherit; }
    svg { display: block; flex: none; }
    .desk { position: relative; flex: 1; min-height: 0; overflow: hidden; display: flex; flex-direction: column; background: #708090; }
    .viewer { position: absolute; left: 599px; top: 28px; right: 1px; bottom: 0; }
    .progress { position: absolute; top: 0; left: 680px; width: 240px; height: 1px; background: linear-gradient(90deg, #1883d7 48px, #d8d8d8 48px); }
    .caption { display: flex; align-items: center; box-sizing: border-box; height: 23px; padding: 0 20px 2px 2px; background: #fff; flex: none; }
    .caption .keys { margin-left: auto; display: flex; gap: 34px; }
    .menu { display: flex; align-items: center; box-sizing: border-box; height: 32px; padding: 0 0 2px 18px; background: #d8bfd8; font-size: 13px; font-weight: bold; color: #2b2b2b; flex: none; }
    .menu button { display: flex; align-items: center; gap: 5px; margin-right: 21px; }
    .tools { display: grid; flex: none; }
    .tools.a { grid-template-columns: repeat(7, 94px); height: 100px; box-sizing: border-box; border: solid #000; border-width: 1px 1px 2px; background: #789; color: #fff; font-size: 16px; line-height: 24px; }
    .tools.b { grid-template-columns: repeat(7, 90px); height: 88px; box-sizing: border-box; border-bottom: 1px solid #000; background: #d5ffff; font-size: 15px; line-height: 24px; }
    .tools.c { grid-auto-flow: column; justify-content: start; gap: 29px; height: 95px; box-sizing: border-box; border: solid #000; border-width: 1px 0; background: #b0c4de; padding-left: 10px; font-size: 15px; line-height: 22px; }
    .tool { display: grid; justify-items: center; align-content: start; white-space: nowrap; }
    .pic { display: grid; place-items: center; }
    .a .pic { height: 42px; } .a .tool { padding-top: 13px; } .a .name { margin-top: 2px; }
    .b .pic { height: 42px; } .b .tool { padding: 9px 2px 0 0; }
    .c .pic { height: 46px; } .c .tool { padding-top: 9px; }
    .c .name { margin-top: 4px; }
    .a .cut { justify-items: start; padding-left: 14px; }
    .strip { height: 7px; flex: none; box-sizing: border-box; background: #a9a9a9; border-bottom: 1px solid #808080; }
    .tracker { display: flex; flex-direction: column; flex: 1; min-height: 0; margin-left: -3px; }
    .sub { height: 30px; box-sizing: border-box; padding-bottom: 3px; background: #fff; display: flex; align-items: center; flex: none; overflow: hidden; }
    .sub svg { margin-left: -6px; }
    .name-bar { height: 34px; box-sizing: border-box; padding: 9px 0 0 3px; font-size: 14px; line-height: 22px; color: #fff; background: #708090; flex: none; }
    .rule { height: 4px; background: #d8bfd8; flex: none; }
    .rule.end { border-bottom: 1px solid #000; }
    .fields { display: grid; grid-template-columns: 175px 1fr; column-gap: 30px; padding-top: 12px; flex: none; }
    .field { display: grid; font-size: 16px; line-height: 24px; }
    .field:first-child span { padding-left: 3px; }
    .field input { box-sizing: border-box; width: 100%; height: 29px; border: 1px solid #000; background: #d3d3d3; padding: 0 9px; font: 12px "Open Sans", sans-serif; color: #333; margin-top: 1px; }
    .field:first-child input { padding-left: 10px; }
    .grid-box { margin-top: 6px; border: solid #000; border-width: 1px 0; background: #fff; overflow: hidden; flex: none; }
    .grid { border-collapse: separate; border-spacing: 0; table-layout: fixed; width: 630px; }
    .grid th, .grid td { box-sizing: border-box; text-align: left; }
    .grid th { height: 25px; padding: 2px 0 0; text-align: center; background: linear-gradient(#f2f2f2, #d8d8d8); border-right: 1px solid #c4c4c4; border-bottom: 1px solid #bfbfbf; font-weight: bold; font-size: 11px; color: #333; }
    .grid td { height: 24px; padding: 0 3px; border-right: 1px solid #ededed; border-bottom: 1px solid #ededed; font-size: 12px; line-height: 16px; color: #333; }
    .grid td:first-child { padding-left: 5px; }
    .grid tbody tr:nth-child(even) { background: #f9f9f9; }
    .g1 { width: 239px; } .g2 { width: 145px; } .g3 { width: 140px; }
    .move { box-sizing: border-box; width: 326px; flex: 1; min-height: 0; margin-top: 10px; border: solid #000; border-width: 1px 1px 0 0; background: #add8e6; overflow: hidden; display: flex; flex-direction: column; }
    .move h2 { margin: 4px 0 0; padding-right: 16px; font-size: 20px; line-height: 30px; font-weight: normal; text-align: center; text-decoration: underline; text-underline-offset: 2px; }
    .days { display: grid; grid-template-columns: 90px 90px 90px; column-gap: 14px; padding-left: 14px; font-size: 17px; line-height: 24px; flex: 1; min-height: 0; }
    .days div { display: flex; flex-direction: column; }
    .days div:nth-child(3) { margin: 0 -5px 0 5px; }
    .days span { height: 27px; padding: 2px 0 0 9px; box-sizing: border-box; }
    .days div:nth-child(3) span { padding-left: 13px; }
    .days div:first-child span { padding: 0; margin-top: -1px; height: 28px; }
    .days output { flex: 1; border: solid #000; border-width: 1px 1px 0; background: #90ee90; }
  `;

  private tools(kind: string, items: Tool[]): TemplateResult {
    return html`<nav class="tools ${kind}">
      ${items.map((t) => html`<button class=${classMap({ tool: true, cut: !!t.cut })}>
        <span class="pic">${t.art ? draw(t.w, t.h, t.art, t.box) : nothing}</span><span class="name">${t.label}</span>
      </button>`)}
    </nav>`;
  }

  render() {
    const blank = Array.from({ length: 9 });
    return html`
      <main class="desk">
        <header class="caption">
          ${draw(16, 14, appGlyph)}
          <div class="keys">
            <button aria-label="Minimize">${draw(11, 11, svg`<path stroke="#555" d="M0 6.500h11" />`)}</button>
            <button aria-label="Restore">${draw(11, 11, svg`<path fill="none" stroke="#555" d="M.500 2.500h7v8h-7z M2.500 2.500v-2h8v8h-3" />`)}</button>
            <button aria-label="Close">${draw(11, 11, svg`<path stroke="#555" d="M0 0l11 11M11 0L0 11" />`)}</button>
          </div>
        </header>
        <div class="progress"></div>
        <nav class="menu">
          <button>${draw(16, 18, zip)}File</button>
          <button>${draw(20, 19, modules)}Modules</button>
          <button>${draw(20, 19, help)}Help</button>
          <button>Version 1.0</button>
        </nav>
        ${this.tools("a", mainTools)}
        ${this.tools("b", subTools)}
        <div class="strip"></div>
        <section class="tracker">
          <header class="sub">${draw(16, 14, appGlyph)}</header>
          <div class="name-bar">Stock tracker</div>
          <div class="rule"></div>
          ${this.tools("c", trackerTools)}
          <div class="rule end"></div>
          <div class="fields">
            <label class="field"><span>Code</span><input type="text" value="105481" /></label>
            <label class="field"><span>Description</span><input type="text" value="FD-B/SIDE DAIRY BEST UHT FINO 50OML" /></label>
          </div>
          <div class="grid-box">
            <table class="grid">
              <thead><tr><th class="g1">Date</th><th class="g2">Transaction</th><th class="g3">Document Number</th><th>Qty In</th></tr></thead>
              <tbody>
                <tr><td>Tue Jan 14 10:50:41 EAT 2025</td><td>ISB</td><td>1</td><td>0</td></tr>
                ${blank.map(() => html`<tr><td></td><td></td><td></td><td></td></tr>`)}
              </tbody>
            </table>
          </div>
          <section class="move">
            <h2>Stock Movement</h2>
            <div class="days">
              <div><span>7 days</span><output aria-label="7 days"></output></div>
              <div><span>14 days</span><output aria-label="14 days"></output></div>
              <div><span>30 days</span><output aria-label="30 days"></output></div>
            </div>
          </section>
        </section>
        <jasper-viewer class="viewer"></jasper-viewer>
      </main>
      <desktop-taskbar></desktop-taskbar>`;
  }
}
